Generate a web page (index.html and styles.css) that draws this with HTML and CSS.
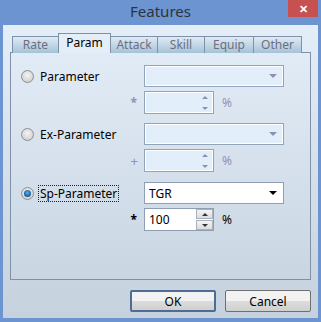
FILE: index.html
```html
<!DOCTYPE html>
<html>
<head>
<title>Features</title>
<link rel="stylesheet" href="styles.css">
</head>
<body>
  <div class="window">
    <div class="titlebar">
      <span></span>
      <span class="title">Features</span>
      <div class="close">&#x2715;</div>
    </div>

    <div class="client">
      <div class="tabs">
        <div class="tab w-rate">Rate</div>
        <div class="tab w-param active">Param</div>
        <div class="tab w-attack">Attack</div>
        <div class="tab w-skill">Skill</div>
        <div class="tab w-equip">Equip</div>
        <div class="tab w-other">Other</div>
      </div>

      <div class="panel">
        <div class="group">
          <label class="radio-row"><span class="radio"></span><span class="label">Parameter</span></label>
          <div class="combo disabled"><span class="value"></span><span class="arrow"></span></div>
          <span class="sign disabled-text">*</span>
          <div class="spin-row">
            <div class="spin disabled">
              <span class="value"></span>
              <span class="spin-btns"><span class="up"></span><span class="down"></span></span>
            </div>
            <span class="pct disabled-text">%</span>
          </div>
        </div>

        <div class="group">
          <label class="radio-row"><span class="radio"></span><span class="label">Ex-Parameter</span></label>
          <div class="combo disabled"><span class="value"></span><span class="arrow"></span></div>
          <span class="sign plus disabled-text">+</span>
          <div class="spin-row">
            <div class="spin disabled">
              <span class="value"></span>
              <span class="spin-btns"><span class="up"></span><span class="down"></span></span>
            </div>
            <span class="pct disabled-text">%</span>
          </div>
        </div>

        <div class="group last">
          <label class="radio-row"><span class="radio checked"></span><span class="label focused">Sp-Parameter</span></label>
          <div class="combo"><span class="value">TGR</span><span class="arrow"></span></div>
          <span class="sign">*</span>
          <div class="spin-row">
            <div class="spin">
              <span class="value">100</span>
              <span class="spin-btns"><span class="up"></span><span class="down"></span></span>
            </div>
            <span class="pct">%</span>
          </div>
        </div>
      </div>

      <div class="buttons">
        <button class="default">OK</button>
        <button>Cancel</button>
      </div>
    </div>
  </div>
</body>
</html>
```

FILE: styles.css
```css
body {
  margin: 0;
  font-family: "Noto Sans", sans-serif;
  font-size: 12px;
  background-color: #6b94d0;
}

.window {
  width: 321px;
  height: 322px;
  display: flex;
  flex-direction: column;
}

.titlebar {
  height: 25px;
  display: grid;
  grid-template-columns: 1fr auto 1fr;
  align-items: start;
}

.title {
  font-size: 15px;
  color: #2b3340;
  line-height: 22px;
}

.close {
  justify-self: end;
  margin-right: 3px;
  width: 30px;
  height: 17px;
  background-color: #c75050;
  color: #fff;
  font-size: 11px;
  font-weight: bold;
  text-align: center;
  line-height: 17px;
}

.client {
  flex: 1;
  margin: 0 3px 4px 3px;
  padding: 8px 7px 6px 7px;
  background: linear-gradient(#e4eef9, #c5d2de);
  display: flex;
  flex-direction: column;
}

/* tabs */
.tabs {
  display: flex;
  align-items: flex-end;
  height: 20px;
  margin-left: 2px;
  margin-bottom: -1px;
  position: relative;
  z-index: 1;
}

.tab {
  box-sizing: border-box;
  height: 17px;
  margin-left: -1px;
  border: 1px solid #7f90a9;
  border-bottom: none;
  background: linear-gradient(#dfeaf5, #a4c3d7);
  color: #6e6e80;
  text-align: center;
  line-height: 16px;
}

.tab:first-child {
  margin-left: 0;
}

.tab.active {
  height: 20px;
  background: #e4eef9;
  color: #000;
  line-height: 18px;
}

.w-rate { width: 47px; }
.w-param { width: 53px; }
.w-attack { width: 48px; }
.w-skill { width: 48px; }
.w-equip { width: 50px; }
.w-other { width: 49px; }

.panel {
  height: 228px;
  box-sizing: border-box;
  border: 1px solid #7f90a9;
  padding: 12px 0 0 10px;
  display: flex;
  flex-direction: column;
  gap: 9px;
}

.group {
  display: grid;
  grid-template-columns: 123px 140px;
  row-gap: 4px;
  align-items: center;
}

.group.last {
  margin-top: 1px;
}

/* radio buttons */
.radio-row {
  display: flex;
  align-items: center;
  gap: 4px;
}

.radio {
  box-sizing: border-box;
  width: 13px;
  height: 13px;
  border-radius: 50%;
  border: 1px solid #8e8f8f;
  background: radial-gradient(circle at 50% 40%, #f4f4f4, #d4d4d4 70%, #c0c0c0);
  display: flex;
  align-items: center;
  justify-content: center;
}

.radio.checked::after {
  content: "";
  width: 7px;
  height: 7px;
  border-radius: 50%;
  background: radial-gradient(circle at 50% 40%, #5fb4e8, #1a64a8 60%, #0d3f74);
}

.label {
  color: #000;
  line-height: 15px;
  padding: 0 1px;
  border: 1px dotted transparent;
}

.label.focused {
  border-color: #222;
}

/* combo boxes */
.combo {
  box-sizing: border-box;
  height: 22px;
  border: 1px solid #8e9fb3;
  background: #fff;
  display: flex;
  align-items: center;
  justify-content: space-between;
  padding: 0 6px 0 4px;
}

.combo.disabled,
.spin.disabled {
  background: #e2eefa;
  border-color: #92a4b7;
  box-shadow: inset 0 0 0 1px #fff;
}

.arrow {
  width: 0;
  height: 0;
  border-left: 4px solid transparent;
  border-right: 4px solid transparent;
  border-top: 4px solid #000;
}

.disabled .arrow {
  border-top-color: #8d90b4;
}

.value {
  color: #000;
}

/* spin boxes */
.sign {
  justify-self: end;
  margin-right: 7px;
  color: #000;
  font-weight: bold;
}

.sign.plus {
  font-weight: normal;
  font-size: 13px;
  margin-right: 6px;
}

.spin-row {
  display: flex;
  align-items: center;
  gap: 8px;
}

.spin {
  box-sizing: border-box;
  width: 70px;
  height: 23px;
  border: 1px solid #8e9fb3;
  background: #fff;
  display: flex;
  align-items: center;
  justify-content: space-between;
  padding: 0 0 0 4px;
}

.spin-btns {
  display: flex;
  flex-direction: column;
  gap: 1px;
}

.spin-btns span {
  box-sizing: border-box;
  width: 17px;
  height: 10px;
  border: 1px solid #a9b1bb;
  background: linear-gradient(#f4f4f4, #dcdcdc);
  display: flex;
  align-items: center;
  justify-content: center;
}

.spin-btns .up::after,
.spin-btns .down::after {
  content: "";
  border-left: 3px solid transparent;
  border-right: 3px solid transparent;
}

.spin-btns .up::after {
  border-bottom: 3px solid #333;
}

.spin-btns .down::after {
  border-top: 3px solid #333;
}

.disabled .spin-btns span {
  border-color: transparent;
  background: none;
}

.disabled .spin-btns .up::after {
  border-bottom-color: #8d90b4;
}

.disabled .spin-btns .down::after {
  border-top-color: #8d90b4;
}

.pct {
  color: #000;
}

.sign.disabled-text,
.pct.disabled-text {
  color: #9191ba;
}

/* dialog buttons */
.buttons {
  margin-top: 10px;
  display: flex;
  justify-content: flex-end;
  gap: 9px;
}

button {
  width: 86px;
  height: 22px;
  font-family: "Noto Sans", sans-serif;
  font-size: 12px;
  color: #000;
  border: 1px solid #707070;
  border-radius: 2px;
  background: linear-gradient(#f2f2f2 50%, #dddddd 50%, #cfcfcf);
  padding: 0;
}

button.default {
  border: 2px solid #4f6d94;
}
```
